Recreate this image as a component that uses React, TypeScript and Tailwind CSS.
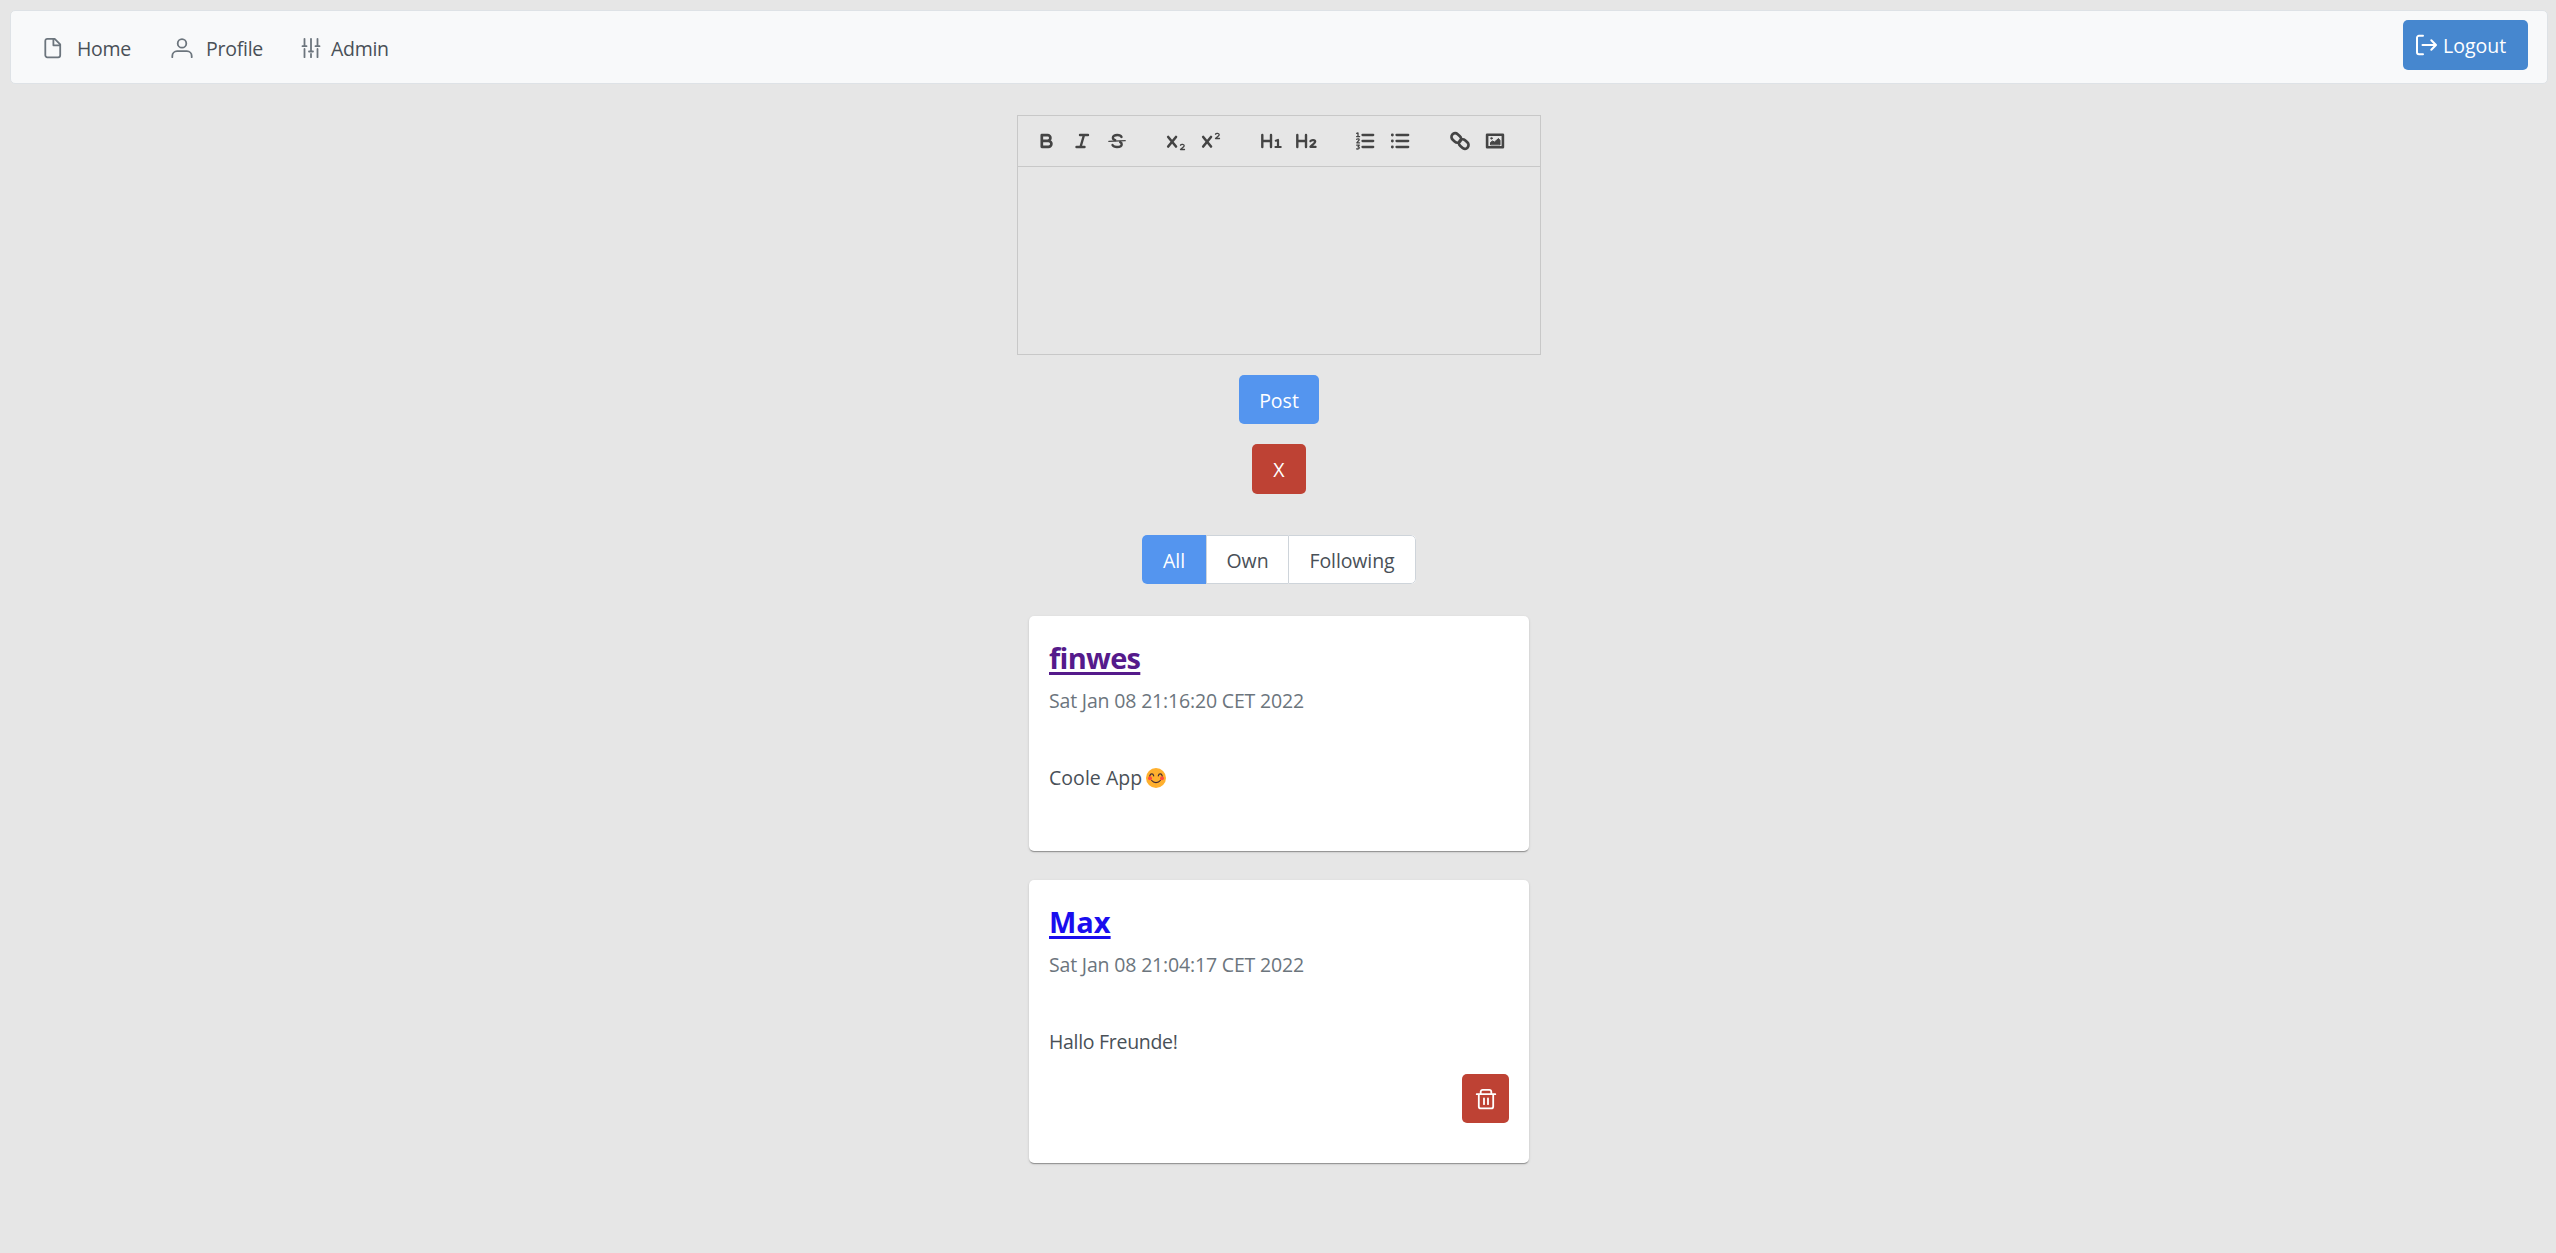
import type { ReactNode } from "react";

const Svg = ({ children, className = "" }: { children: ReactNode; className?: string }) => (
  <svg viewBox="0 0 20 20" width="20" height="20" fill="none" stroke="currentColor" strokeWidth="1.8" strokeLinecap="round" strokeLinejoin="round" className={`shrink-0 overflow-visible ${className}`}>
    {children}
  </svg>
);

const FileIcon = () => (
  <Svg>
    <path d="M4.3 .9h7.400l5.500 5.500v10.900a2 2 0 0 1-2 2H4.300a2 2 0 0 1-2-2V2.900a2 2 0 0 1 2-2ZM10.400 1.300v6h6.300" />
  </Svg>
);
const UserIcon = () => (
  <Svg>
    <circle cx="10" cy="5.400" r="4.300" />
    <path d="M.3 19.200v-1.200a4.800 4.800 0 0 1 4.800-4.800h9.800a4.800 4.800 0 0 1 4.800 4.800v1.200" />
  </Svg>
);
const SlidersIcon = () => (
  <Svg>
    <path d="M3.500 .8v5.800M3.500 11v8.200M10 .8v10.400M10 15.800v3.400M16.500 .8v5.800M16.500 11v8.200M1.500 8.200h4M8 13.500h4M14.500 8.200h4M3.500 6v2M10 11v2.500M16.500 6v2" />
  </Svg>
);
const LogoutIcon = () => (
  <Svg>
    <path strokeWidth="2" d="M7 .8H3a2 2 0 0 0-2 2v14.400a2 2 0 0 0 2 2h4M6.500 10h13.300M15.300 5.200l4.700 4.800-4.700 4.800" />
  </Svg>
);
const TrashIcon = () => (
  <Svg>
    <path d="M.7 5.200h18.600M2.800 5.400v12a2 2 0 0 0 2 2h10.400a2 2 0 0 0 2-2v-12M4.700 5V2.800a2 2 0 0 1 2-2h6.600a2 2 0 0 1 2 2V5M8 9.500v5.700M12 9.500v5.700" />
  </Svg>
);

const tools: ReactNode[][] = [
  [
    <path d="M4.800 4.200v11.600h6.600a3 3 0 0 0 0-6H4.800h5.800a2.800 2.800 0 0 0 0-5.600Z" strokeWidth="2.700" />,
    <path d="M8 4h8M4.500 16h8M12 4 8.500 16" strokeWidth="2.400" />,
    <g>
      <path d="M14.500 6c-.6-1.400-2-2-4.300-2-2.700 0-4.300 1-4.300 2.700 0 1.200.9 2 2.300 2.400M5.500 14c.8 1.400 2.300 2 4.500 2 2.800 0 4.700-1 4.700-2.800 0-1-.5-1.600-1.500-2.100" strokeWidth="2.400" />
      <path d="M1.800 10.300 18.200 9.700" strokeWidth="1.300" />
    </g>,
  ],
  [
    <g>
      <path d="M2.200 6 10 15.500M10 6 2.200 15.500" strokeWidth="2.600" />
      <path d="M14.500 14.200c.8-1.300 3.700-1 3.700.6 0 1.400-2.500 2-3.700 3.700h4" strokeWidth="1.300" />
    </g>,
    <g>
      <path d="M2.200 6 10 15.500M10 6 2.200 15.500" strokeWidth="2.600" />
      <path d="M14.500 3.200c.8-1.300 3.700-1 3.700.6 0 1.400-2.500 2-3.700 3.700h4" strokeWidth="1.300" />
    </g>,
  ],
  [
    <g>
      <path d="M1.300 4v12M10 4v12M1.300 10H10" strokeWidth="2.400" />
      <path d="M14.800 9.700l2.200-.7v7M14.500 16h5.200" strokeWidth="2.200" />
    </g>,
    <g>
      <path d="M1.300 4v12M10 4v12M1.300 10H10" strokeWidth="2.400" />
      <path d="M14.400 10.200c1-1.600 4.800-1.500 4.800.5 0 1.600-3.500 3-4.800 5.200h5.200" strokeWidth="2.200" />
    </g>,
  ],
  [
    <g>
      <path d="M7.500 4h10.700M7.500 10h10.700M7.500 16h10.700" strokeWidth="2.300" />
      <path d="M1.700 2.400 3 1.900v3.700M1.600 5.600h3M1.700 8.300c1-.8 2.700-.5 2.500.6L1.800 11.800h2.700M1.700 14.200h2.600L3 15.900c1.900 0 1.900 2.500-1.400 2" strokeWidth="1.300" />
    </g>,
    <g>
      <path d="M6.500 4h11.700M6.500 10h11.700M6.500 16h11.700" strokeWidth="2.300" />
      <path d="M2.300 4h.1M2.300 10h.1M2.300 16h.1" strokeWidth="2.800" />
    </g>,
  ],
  [
    <g strokeWidth="2.700">
      <rect x="1.100" y="3.200" width="10.400" height="7.400" rx="3.700" transform="rotate(42 6.300 6.900)" />
      <rect x="8.500" y="9.400" width="10.400" height="7.400" rx="3.700" transform="rotate(42 13.700 13.100)" />
    </g>,
    <g>
      <rect x="2.100" y="3.800" width="15.800" height="12.400" strokeWidth="2.600" />
      <path d="M5.500 13.500v-2l2-1.500 2 1 4-3.500 1.500 2v4Z" fill="currentColor" strokeWidth="1" />
      <circle cx="6.500" cy="7.300" r=".9" fill="currentColor" strokeWidth=".6" />
    </g>,
  ],
];

const nav = [
  { label: "Home", icon: <FileIcon />, box: "ml-[32px] w-[128px] gap-[14px]", text: "tracking-[-0.3px]" },
  { label: "Profile", icon: <UserIcon />, box: "ml-[1px] w-[128px] gap-[14px]", text: "tracking-[-0.25px]" },
  { label: "Admin", icon: <SlidersIcon />, box: "ml-[1px] gap-[10px]", text: "tracking-[-0.3px]" },
];

const Smile = () => (
  <svg viewBox="0 0 20 20" width="20" height="20" className="ml-[4px] shrink-0">
    <circle cx="10" cy="10" r="10" fill="#ffb02e" />
    <circle cx="4" cy="10.200" r="2" fill="#ff4b3e" />
    <circle cx="16" cy="10.200" r="2" fill="#ff4b3e" />
    <path d="M3.800 7.800c.6-2.600 3.300-2.600 3.900 0M12.300 7.800c.6-2.600 3.300-2.600 3.900 0M5.700 12.500c2 2.700 6.600 2.700 8.600 0" fill="none" stroke="#402a32" strokeWidth="1.200" strokeLinecap="round" />
  </svg>
);

type PostProps = { name: string; title: string; date: string; text: string; body: string; smile?: boolean; own?: boolean; size: string };

const PostCard = ({ name, title, date, text, body, smile, own, size }: PostProps) => (
  <article className={`flex w-[500px] flex-col rounded-[5px] bg-white px-5 shadow-[0_2px_1px_-1px_rgba(0,0,0,0.2),0_1px_1px_0_rgba(0,0,0,0.14),0_1px_3px_0_rgba(0,0,0,0.12)] ${size}`}>
    <h2 className={`mt-[22px] h-[40px] text-[29px] leading-[40px] font-bold ${title}`}>
      <a className="underline decoration-[3px] underline-offset-[3px]">{name}</a>
    </h2>
    <p className="mt-[9px] h-[28px] leading-[28px] tracking-[-0.17px] text-[#6c757d]">{date}</p>
    <div className={`mt-[49px] flex h-[28px] items-center leading-[28px] ${body}`}>
      {text}
      {smile && <Smile />}
    </div>
    {own && (
      <button className="mt-[18px] flex h-[49px] w-[47px] items-center justify-center self-end rounded-[5px] bg-[#be4234] text-white">
        <TrashIcon />
      </button>
    )}
  </article>
);

export default function App() {
  return (
    <div className="flex h-[1253px] w-full flex-col items-center bg-[#e6e6e6] pt-[10px] pr-[8px] pl-[10px] font-['Open_Sans',sans-serif] text-[19.500px] text-[#495057]">
      <header className="flex h-[74px] w-full shrink-0 items-center rounded-[5px] border border-[#dee2e6] bg-[#f8f9fa]">
        {nav.map((n) => (
          <a key={n.label} className={`flex items-center pt-[2px] ${n.box}`}>
            <span className="text-[#6c757d]">{n.icon}</span>
            <span className={`pt-[2px] ${n.text}`}>{n.label}</span>
          </a>
        ))}
        <button className="mr-[19px] mb-[4px] ml-auto flex h-[50px] w-[125px] items-center gap-[7px] rounded-[5px] bg-[#4687cf] pl-[13px] text-white">
          <LogoutIcon />
          <span className="pt-[2px]">Logout</span>
        </button>
      </header>

      <section className="mt-[31px] flex h-[240px] w-[524px] shrink-0 flex-col border border-[#c8c8c8]">
        <div className="flex h-[51px] items-center gap-[24.500px] border-b border-[#c8c8c8] pl-[11px] text-[#444]">
          {tools.map((group, i) => (
            <div key={i} className="flex">
              {group.map((icon, j) => (
                <button key={j} className="flex w-[35px] justify-center">
                  <Svg>{icon}</Svg>
                </button>
              ))}
            </div>
          ))}
        </div>
      </section>

      <button className="mt-[20px] h-[49px] w-[80px] shrink-0 rounded-[5px] bg-[#5495ef] pt-[2px] text-white">Post</button>
      <button className="mt-[20px] h-[50px] w-[54px] shrink-0 rounded-[5px] bg-[#be4234] pt-[2px] text-white">X</button>

      <div className="mt-[41px] flex h-[49px] w-[274px] shrink-0 overflow-hidden rounded-[5px] bg-white">
        <button className="w-[64px] bg-[#5495ef] pt-[2px] text-white">All</button>
        <button className="w-[82px] border-y border-l border-[#ced4da] pt-[2px]">Own</button>
        <button className="w-[128px] rounded-r-[5px] border border-[#ced4da] pt-[2px] tracking-[-0.1px]">Following</button>
      </div>

      <main className="mt-[32px] flex flex-col gap-[29px]">
        <PostCard name="finwes" title="text-[#551a8b] tracking-[-0.7px]" date="Sat Jan 08 21:16:20 CET 2022" text="Coole App" body="tracking-[0.05px]" smile size="h-[235px]" />
        <PostCard name="Max" title="text-[#1a0dee]" date="Sat Jan 08 21:04:17 CET 2022" text="Hallo Freunde!" body="tracking-[-0.3px]" own size="h-[283px]" />
      </main>
    </div>
  );
}
